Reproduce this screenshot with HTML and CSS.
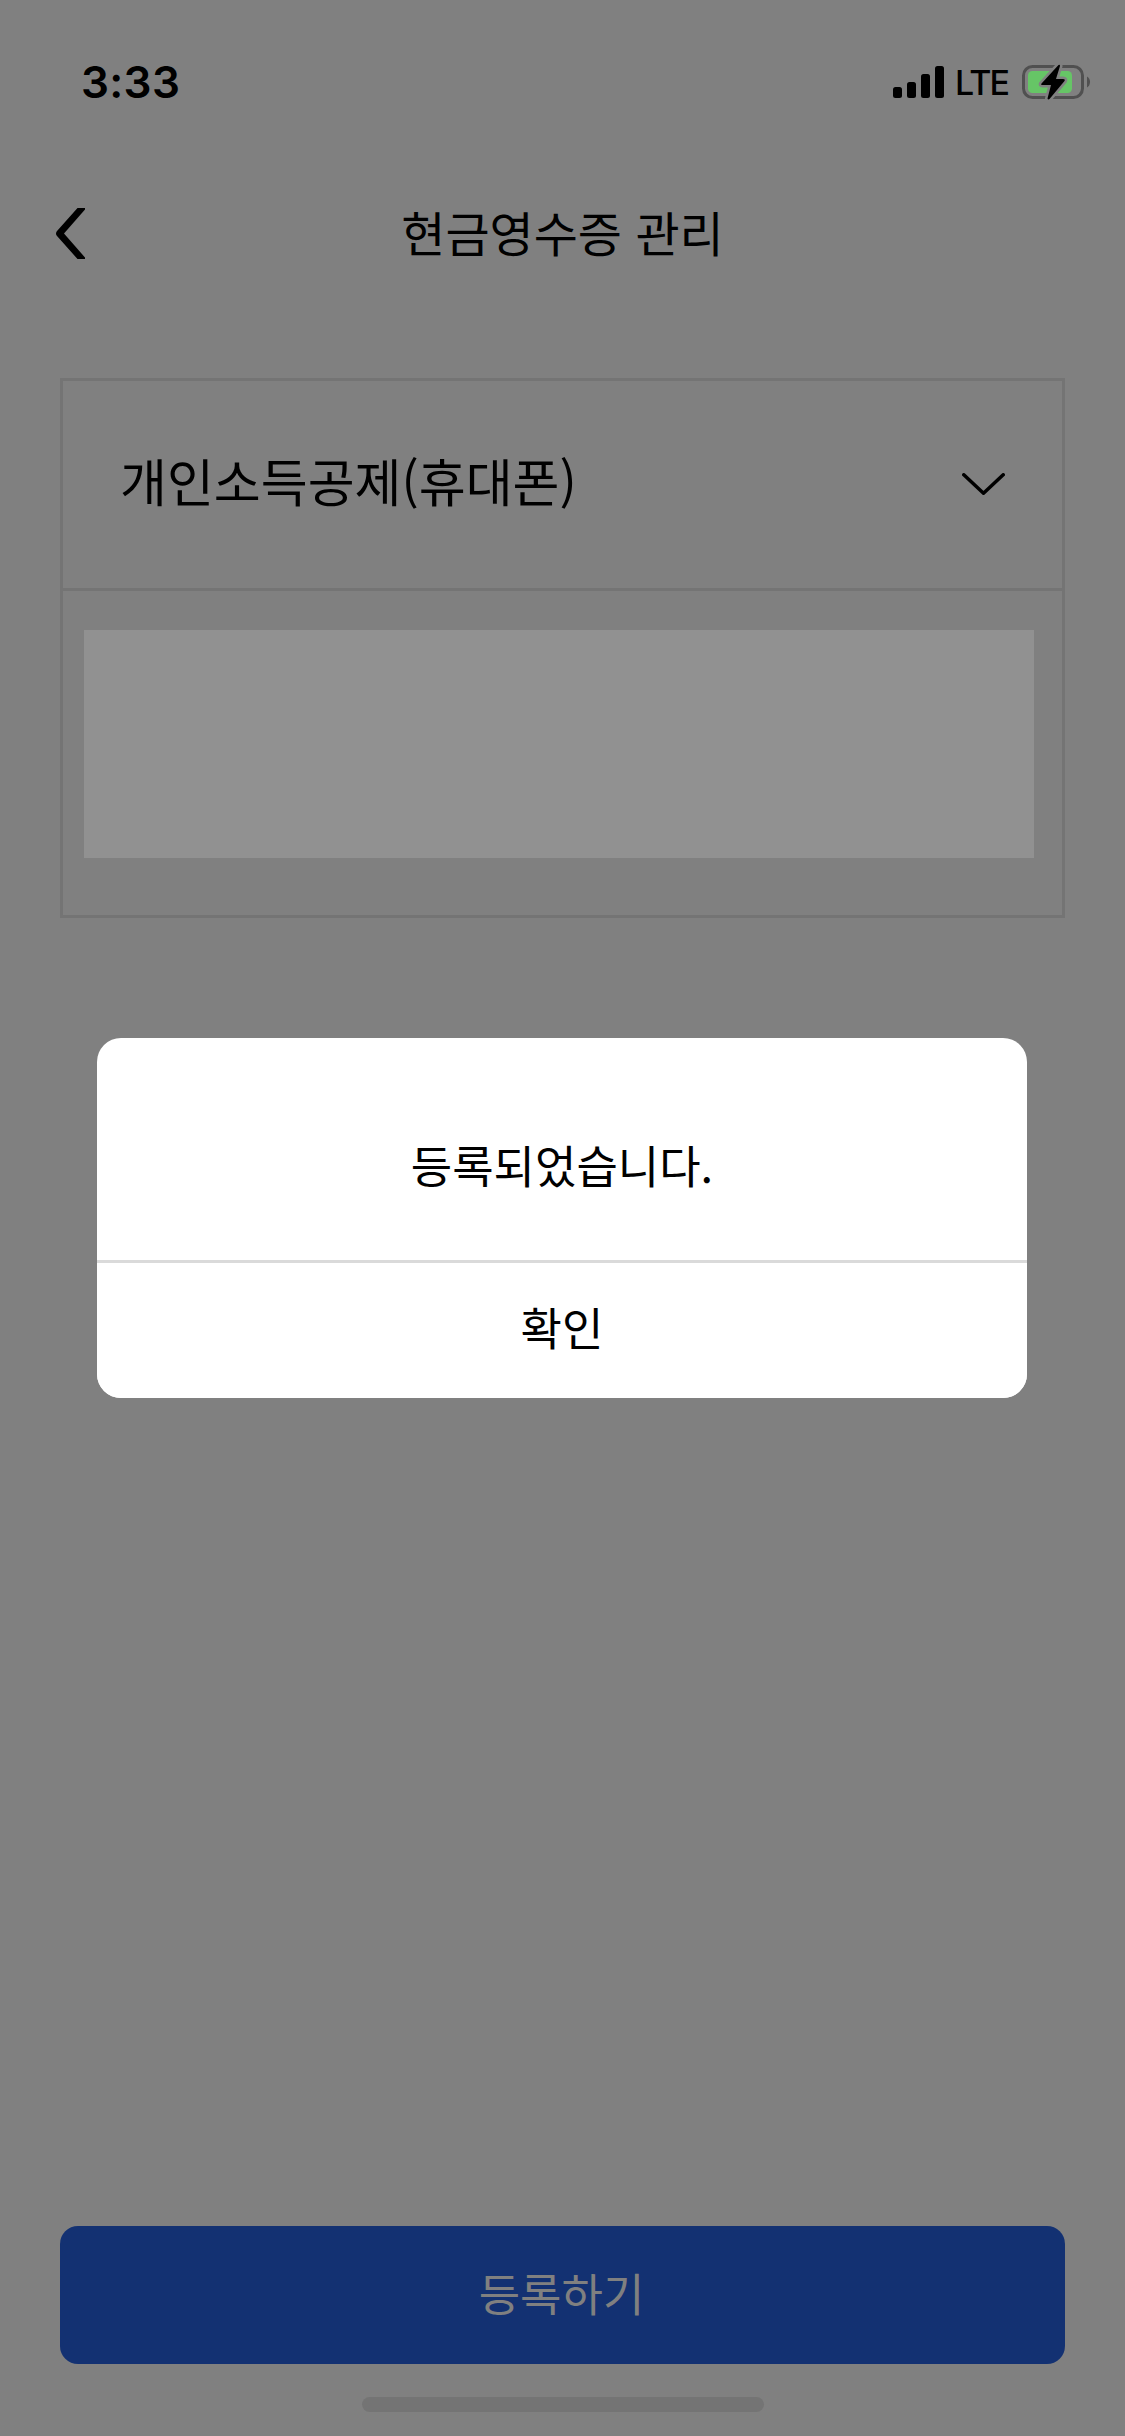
FILE: index.html
```html
<!DOCTYPE html>
<html lang="ko">
<head>
<meta charset="utf-8">
<title>현금영수증 관리</title>
<link rel="stylesheet" href="styles.css">
</head>
<body>
<div class="screen">
  <header class="status">
    <span class="time">3:33</span>
    <div class="indicators">
      <svg class="signal" viewBox="0 0 51 32">
        <rect x="0" y="21" width="9" height="11" rx="2.5"/>
        <rect x="14" y="16" width="9" height="16" rx="2.5"/>
        <rect x="28" y="8" width="9" height="24" rx="2.5"/>
        <rect x="42" y="0" width="9" height="32" rx="2.5"/>
      </svg>
      <span class="network">LTE</span>
      <svg class="battery" viewBox="0 0 70 36">
        <rect x="1.5" y="2.5" width="59" height="31" rx="9" fill="none" stroke="#505050" stroke-width="3"/>
        <path d="M65 12.5a6.5 6.5 0 0 1 0 11z" fill="#505050"/>
        <rect x="6" y="7" width="44" height="22" rx="4.5" fill="#66c566"/>
        <path class="bolt" d="M36.5 1 19.5 19.5Q18.500 21 20.500 21L29 21 25.500 34.500Q26 36 27.500 35L42.500 17Q43.500 15 41 15L34 15 38 2Q38 0 36.500 1Z"/>
      </svg>
    </div>
  </header>

  <nav class="nav">
    <svg class="back" viewBox="0 0 29 51"><path d="M21.500 0H29V1.500L8 25.500 29 49.500V51H21.500L.8 27.800Q-.8 25.500.8 23.200Z"/></svg>
    <h1 class="title">현금영수증 관리</h1>
  </nav>

  <main class="card">
    <div class="select">
      <span class="option">개인소득공제(휴대폰)</span>
      <svg class="chevron" viewBox="0 0 43 23"><path d="M1.800 1.800 21.500 20.200 41.200 1.800"/></svg>
    </div>
    <div class="number"></div>
  </main>

  <footer class="footer">
    <button class="submit">등록하기</button>
    <div class="home"></div>
  </footer>

  <section class="dialog" role="dialog">
    <p class="message">등록되었습니다.</p>
    <button class="confirm">확인</button>
  </section>
</div>
</body>
</html>
```
FILE: styles.css
```css
* { box-sizing: border-box; }

body { margin: 0; }

.screen {
  position: relative;
  display: flex;
  flex-direction: column;
  width: 1125px;
  height: 2436px;
  background: #808080;
  color: #000;
  font-family: "Noto Sans CJK KR", sans-serif;
}

.status {
  display: flex;
  justify-content: space-between;
  align-items: center;
  height: 164px;
  padding: 0 33px 0 81px;
}

.time {
  font: 600 44px/44px Inter, sans-serif;
  letter-spacing: 0.3px;
}

.indicators {
  display: flex;
  align-items: center;
}

.signal { width: 51px; height: 32px; }

.network {
  width: 78px;
  padding: 2px 0 0 11px;
  font: 500 34px/36px Inter, sans-serif;
  letter-spacing: -1.8px;
}

.battery { width: 70px; height: 36px; }

.bolt {
  stroke: #808080;
  stroke-width: 5px;
  paint-order: stroke;
}

.nav {
  display: grid;
  grid-template-columns: 29px 1fr 29px;
  align-items: center;
  height: 139px;
  padding: 0 56px;
}

.back { width: 29px; height: 51px; }

.title {
  margin: 0;
  padding-bottom: 6px;
  text-align: center;
  font-size: 48px;
  font-weight: 400;
  line-height: 70px;
}

.card {
  width: 1005px;
  height: 540px;
  margin: 75px 60px 0;
  border: 3px solid #747474;
}

.select {
  display: flex;
  justify-content: space-between;
  align-items: center;
  height: 210px;
  padding: 0 57px;
  border-bottom: 3px solid #747474;
  font-size: 51px;
}

.option { padding-bottom: 9px; }

.chevron {
  width: 43px;
  height: 23px;
  fill: none;
  stroke: #000;
  stroke-width: 3.5px;
  stroke-linecap: round;
  stroke-linejoin: round;
}

.number {
  width: 949.5px;
  height: 228px;
  margin: 38.5px 0 0 21px;
  background: #919191;
}

.footer {
  display: flex;
  flex-direction: column;
  align-items: center;
  gap: 33px;
  margin-top: auto;
  padding-bottom: 24px;
}

.submit {
  width: 1005px;
  height: 138px;
  padding: 0 2px 4px 0;
  border: 0;
  border-radius: 18px;
  background: #133172;
  color: #808080;
  font: 400 45px/66px "Noto Sans CJK KR", sans-serif;
}

.home {
  width: 402px;
  height: 15px;
  border-radius: 8px;
  background: #747474;
}

.dialog {
  position: absolute;
  top: 1038px;
  left: 97px;
  display: flex;
  flex-direction: column;
  width: 930px;
  height: 360px;
  overflow: hidden;
  border-radius: 24px;
  background: #fff;
}

.message {
  height: 222px;
  margin: 0;
  padding-top: 94px;
  text-align: center;
  font-size: 45px;
  line-height: 66px;
}

.confirm {
  height: 138px;
  padding: 0 0 8px;
  border: 0;
  border-top: 3px solid #dadada;
  background: #fff;
  color: #000;
  font: 400 45px/66px "Noto Sans CJK KR", sans-serif;
}
```
